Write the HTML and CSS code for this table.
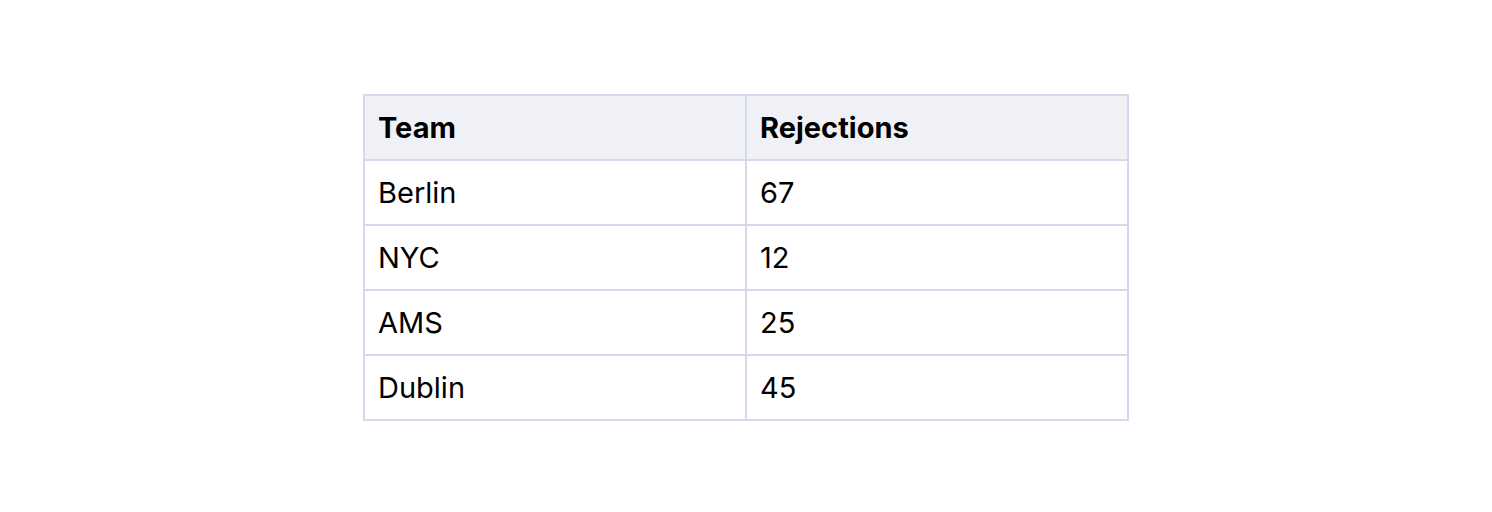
FILE: index.html
```html
<!DOCTYPE html>
<html lang="en">
<head>
<meta charset="utf-8">
<link rel="stylesheet" href="styles.css">
</head>
<body>
<main class="page">
  <table class="data-table">
    <thead>
      <tr><th>Team</th><th>Rejections</th></tr>
    </thead>
    <tbody>
      <tr><td>Berlin</td><td>67</td></tr>
      <tr><td>NYC</td><td>12</td></tr>
      <tr><td>AMS</td><td>25</td></tr>
      <tr><td>Dublin</td><td>45</td></tr>
    </tbody>
  </table>
</main>
</body>
</html>
```
FILE: styles.css
```css
html, body {
  margin: 0;
  padding: 0;
  background: #ffffff;
}
.page {
  height: 512px;
  box-sizing: border-box;
  padding-top: 3px;
  display: flex;
  align-items: center;
  justify-content: center;
  font-family: Inter, "Liberation Sans", sans-serif;
  color: #000000;
}
.data-table {
  border-collapse: collapse;
  width: 766px;
  table-layout: fixed;
  border: 2px solid #d8d8ec;
  font-size: 29px;
}
.data-table th,
.data-table td {
  border: 2px solid #d8d8ec;
  width: 50%;
  height: 65.2px;
  padding: 0 13px;
  text-align: left;
  vertical-align: middle;
  box-sizing: border-box;
}
.data-table th {
  background: #f0f1f6;
  font-weight: 700;
}
.data-table td {
  font-weight: 400;
}
```
